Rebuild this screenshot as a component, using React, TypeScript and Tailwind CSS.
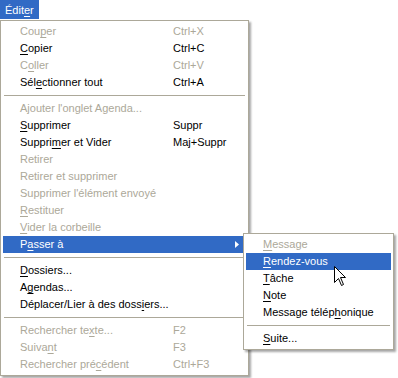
import React from "react";

type Item =
  | { sep: true }
  | { label: string; key?: string; off?: boolean; hot?: boolean; sub?: boolean };

const mainItems: Item[] = [
  { label: "Cou&per", key: "Ctrl+X", off: true },
  { label: "&Copier", key: "Ctrl+C" },
  { label: "C&oller", key: "Ctrl+V", off: true },
  { label: "Sél&ectionner tout", key: "Ctrl+A" },
  { sep: true },
  { label: "Ajouter l'onglet Agenda...", off: true },
  { label: "&Supprimer", key: "Suppr" },
  { label: "Suppri&mer et Vider", key: "Maj+Suppr" },
  { label: "Retirer", off: true },
  { label: "Retirer et supprimer", off: true },
  { label: "Supprimer l'élément envoyé", off: true },
  { label: "&Restituer", off: true },
  { label: "&Vider la corbeille", off: true },
  { label: "P&asser à", hot: true, sub: true },
  { sep: true },
  { label: "&Dossiers..." },
  { label: "A&gendas..." },
  { label: "Déplacer/Lier à des doss&iers..." },
  { sep: true },
  { label: "Rechercher te&xte...", key: "F2", off: true },
  { label: "Suiva&nt", key: "F3", off: true },
  { label: "Rechercher pré&cédent", key: "Ctrl+F3", off: true },
];

const subItems: Item[] = [
  { label: "&Message", off: true },
  { label: "&Rendez-vous", hot: true },
  { label: "&Tâche" },
  { label: "&Note" },
  { label: "Message télép&honique" },
  { sep: true },
  { label: "&Suite..." },
];

// "&" marks the mnemonic letter, as in a Windows resource file
function Label({ text }: { text: string }) {
  const i = text.indexOf("&");
  if (i < 0) return <>{text}</>;
  return (
    <>
      {text.slice(0, i)}
      <span className="underline decoration-1 underline-offset-[2px]">{text[i + 1]}</span>
      {text.slice(i + 2)}
    </>
  );
}

function Rows({ items, labelWidth }: { items: Item[]; labelWidth?: string }) {
  return (
    <>
      {items.map((it, idx) =>
        "sep" in it ? (
          <div key={idx} className="my-[4px] mx-px h-px bg-[#aca899]" />
        ) : (
          <div
            key={idx}
            className={`relative flex h-[17px] items-center pl-[17px] whitespace-nowrap ${
              it.hot ? "bg-[#316ac5] text-white" : it.off ? "text-[#aca899]" : "text-black"
            }`}
          >
            <span className={labelWidth}>
              <Label text={it.label} />
            </span>
            {it.key && <span>{it.key}</span>}
            {it.sub && (
              <svg className="absolute right-[7px] top-[5px]" width="4" height="7" viewBox="0 0 4 7">
                <path d="M0 0L4 3.5L0 7Z" fill="currentColor" />
              </svg>
            )}
          </div>
        )
      )}
    </>
  );
}

export default function App() {
  return (
    <div
      className="relative h-[378px] w-[398px] overflow-hidden bg-white text-[11px] leading-none"
      style={{ fontFamily: '"Liberation Sans", Arial, sans-serif' }}
    >
      <div className="flex h-[19px] w-[39px] items-center bg-[#316ac5] pl-[5px] pt-px text-white">
        <Label text="Édit&er" />
      </div>

      <div className="mt-px w-[249px] border border-[#aca899] bg-white p-[2px] shadow-[2px_2px_2px_rgba(0,0,0,0.35)]">
        <Rows items={mainItems} labelWidth="w-[153px]" />
      </div>

      {/* submenu of "Passer à" */}
      <div className="absolute left-[243px] top-[233px] w-[151px] border border-[#aca899] bg-white p-[2px] shadow-[2px_2px_2px_rgba(0,0,0,0.35)]">
        <Rows items={subItems} />
      </div>

      {/* mouse pointer */}
      <svg className="absolute left-[334px] top-[266px]" width="13" height="21" viewBox="0 0 13 21">
        <path
          d="M0.5 0.5V16.5L4.5 12.5L7.5 19.5L9.5 18.5L6.5 11.5H11.5Z"
          fill="white"
          stroke="black"
          strokeWidth="1"
          strokeLinejoin="miter"
        />
      </svg>
    </div>
  );
}
